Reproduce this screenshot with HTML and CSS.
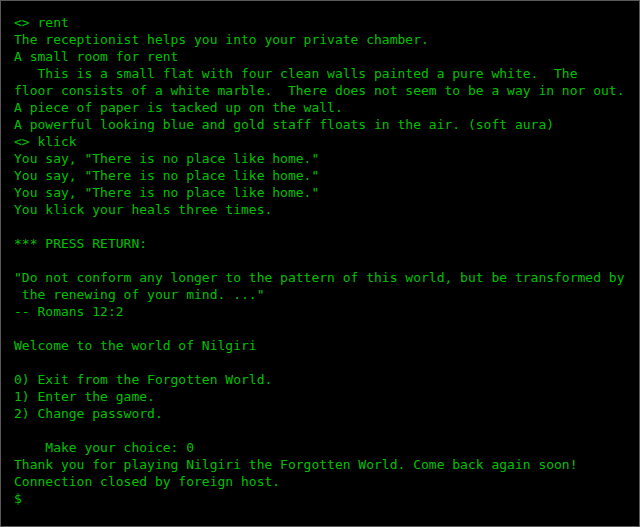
FILE: index.html
```html
<!DOCTYPE html>
<html>
<head>
<meta charset="utf-8">
<link rel="stylesheet" href="styles.css">
</head>
<body>
<div class="term"><pre class="screen">&lt;&gt; rent
The receptionist helps you into your private chamber.
A small room for rent
   This is a small flat with four clean walls painted a pure white.  The
floor consists of a white marble.  There does not seem to be a way in nor out.
A piece of paper is tacked up on the wall.
A powerful looking blue and gold staff floats in the air. (soft aura)
&lt;&gt; klick
You say, "There is no place like home."
You say, "There is no place like home."
You say, "There is no place like home."
You klick your heals three times.

*** PRESS RETURN:

"Do not conform any longer to the pattern of this world, but be transformed by
 the renewing of your mind. ..."
-- Romans 12:2

Welcome to the world of Nilgiri

0) Exit from the Forgotten World.
1) Enter the game.
2) Change password.

    Make your choice: 0
Thank you for playing Nilgiri the Forgotten World. Come back again soon!
Connection closed by foreign host.
$</pre></div>
</body>
</html>
```

FILE: styles.css
```css
html, body {
  margin: 0;
  padding: 0;
  background: #000;
}
.term {
  box-sizing: border-box;
  width: 640px;
  height: 527px;
  border: 1px solid #5a5a5a;
  background: #000;
  padding: 13px 13px 0 13px;
  overflow: hidden;
}
.screen {
  margin: 0;
  font-family: "DejaVu Sans Mono", monospace;
  font-size: 13px;
  line-height: 17px;
  color: #00c000;
  white-space: pre;
}
```
